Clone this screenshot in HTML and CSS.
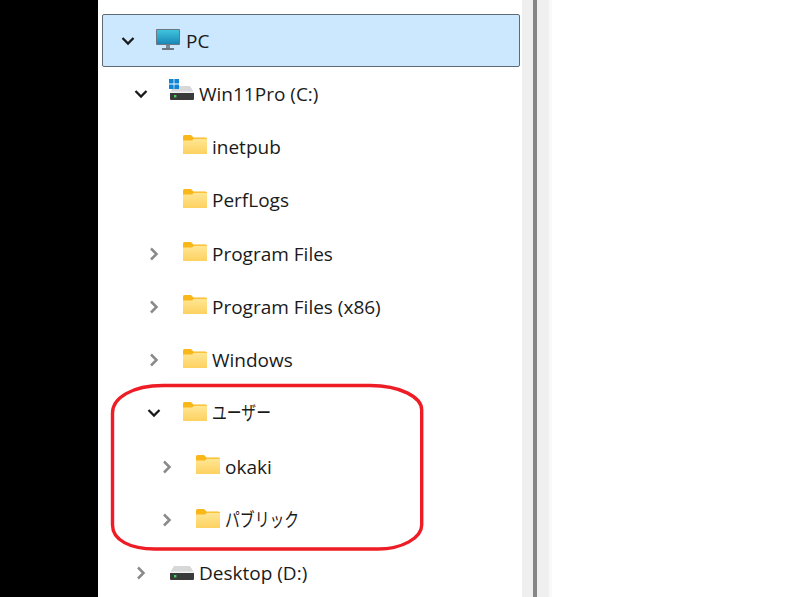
FILE: index.html
```html
<!DOCTYPE html>
<html lang="ja">
<head>
<meta charset="utf-8">
<title>PC</title>
<link rel="stylesheet" href="styles.css">
</head>
<body>
<svg width="0" height="0" class="defs">
  <defs>
    <linearGradient id="fg" x1="0" y1="0" x2="0" y2="1"><stop offset="0" stop-color="#ffe694"/><stop offset="1" stop-color="#fdd160"/></linearGradient>
    <linearGradient id="sg" x1="0" y1="0" x2="0" y2="1"><stop offset="0" stop-color="#3fc4dd"/><stop offset="1" stop-color="#1a88b8"/></linearGradient>
    <symbol id="folder" viewBox="0 0 24 20">
      <path d="M0 2.5Q0 1 1.5 1H8L10.5 3.5H22.5Q24 3.5 24 5V18.5Q24 20 22.5 20H1.5Q0 20 0 18.5Z" fill="#f9b71a"/>
      <path d="M0 6.5H9L11 4.8H23Q24 4.8 24 6V18.5Q24 20 22.5 20H1.5Q0 20 0 18.5Z" fill="url(#fg)"/>
    </symbol>
    <symbol id="down" viewBox="0 0 14 14"><path d="M1.5 4L7 9.5L12.5 4" fill="none" stroke="#1a1a1a" stroke-width="2.3"/></symbol>
    <symbol id="right" viewBox="0 0 14 14"><path d="M4 1.5L9.5 7L4 12.5" fill="none" stroke="#8a8a8a" stroke-width="2.5"/></symbol>
    <symbol id="drive" viewBox="0 0 24 14">
      <path d="M4 0H20L24 6.5H0Z" fill="#d8d8d8"/>
      <rect x="0" y="6" width="24" height="8" rx="1" fill="#3a3a3a"/>
      <rect x="0" y="5.5" width="24" height="1.5" fill="#f2f2f2"/>
      <rect x="4" y="9" width="2.4" height="2.4" fill="#3fd45a"/>
    </symbol>
  </defs>
</svg>
<div class="screen">
  <div class="blackout"></div>
  <nav class="tree">
    <div class="row selected lv0">
      <span class="chev"><svg class="ic"><use href="#down"/></svg></span>
      <svg class="pc" viewBox="0 0 24 22">
        <rect x="0" y="0" width="24" height="16" rx="1" fill="#6b7680"/>
        <rect x="1" y="1" width="22" height="14" fill="url(#sg)"/>
        <rect x="10" y="16" width="4" height="3" fill="#7d8790"/>
        <rect x="6" y="19" width="12" height="2" fill="#6b7680"/>
      </svg>
      <span class="label">PC</span>
    </div>
    <div class="row lv1">
      <span class="chev"><svg class="ic"><use href="#down"/></svg></span>
      <span class="drive-wrap">
        <svg class="win" viewBox="0 0 10 10"><path d="M0 0H4.6V4.6H0ZM5.4 0H10V4.6H5.4ZM0 5.4H4.6V10H0ZM5.4 5.4H10V10H5.4Z" fill="#1284d6"/></svg>
        <svg class="drive"><use href="#drive"/></svg>
      </span>
      <span class="label">Win11Pro (C:)</span>
    </div>
    <div class="row lv2">
      <span class="chev"></span>
      <svg class="folder"><use href="#folder"/></svg>
      <span class="label">inetpub</span>
    </div>
    <div class="row lv2">
      <span class="chev"></span>
      <svg class="folder"><use href="#folder"/></svg>
      <span class="label">PerfLogs</span>
    </div>
    <div class="row lv2">
      <span class="chev"><svg class="ic"><use href="#right"/></svg></span>
      <svg class="folder"><use href="#folder"/></svg>
      <span class="label">Program Files</span>
    </div>
    <div class="row lv2">
      <span class="chev"><svg class="ic"><use href="#right"/></svg></span>
      <svg class="folder"><use href="#folder"/></svg>
      <span class="label">Program Files (x86)</span>
    </div>
    <div class="row lv2">
      <span class="chev"><svg class="ic"><use href="#right"/></svg></span>
      <svg class="folder"><use href="#folder"/></svg>
      <span class="label">Windows</span>
    </div>
    <div class="row lv2">
      <span class="chev"><svg class="ic"><use href="#down"/></svg></span>
      <svg class="folder"><use href="#folder"/></svg>
      <span class="label ja">ユーザー</span>
    </div>
    <div class="row lv3">
      <span class="chev"><svg class="ic"><use href="#right"/></svg></span>
      <svg class="folder"><use href="#folder"/></svg>
      <span class="label">okaki</span>
    </div>
    <div class="row lv3">
      <span class="chev"><svg class="ic"><use href="#right"/></svg></span>
      <svg class="folder"><use href="#folder"/></svg>
      <span class="label ja">パブリック</span>
    </div>
    <div class="row lv1">
      <span class="chev"><svg class="ic"><use href="#right"/></svg></span>
      <span class="drive-wrap"><svg class="drive"><use href="#drive"/></svg></span>
      <span class="label">Desktop (D:)</span>
    </div>
  </nav>
  <div class="scroll-a"></div>
  <div class="splitter"></div>
  <div class="scroll-b"></div>
  <div class="pane-edge"></div>
  <main class="pane"></main>
  <svg class="callout" viewBox="0 0 800 597" aria-hidden="true">
    <path d="M163 385.5H370C400 385.5 421.7 397 421.7 410V525C421.7 538 402 549 378 549H155C130 549 112.5 540 112.5 525V413C112.5 398 132 385.5 163 385.5Z" fill="none" stroke="#ee1c25" stroke-width="3.4"/>
  </svg>
</div>
</body>
</html>
```
FILE: styles.css
```css
html, body {
  margin: 0;
  padding: 0;
  background: #fff;
}
.defs {
  position: absolute;
}
.screen {
  position: relative;
  display: flex;
  width: 800px;
  height: 597px;
  overflow: hidden;
  font-family: "Open Sans", "Noto Sans CJK JP", sans-serif;
  font-size: 19px;
  color: #1a1a1a;
}
.blackout {
  width: 98px;
  background: #000;
}
.tree {
  width: 424px;
  padding: 14px 2px 0 4px;
  box-sizing: border-box;
  display: flex;
  flex-direction: column;
  background: #fff;
}
.row {
  display: flex;
  align-items: center;
  flex: 0 0 53.3px;
  box-sizing: border-box;
}
.selected {
  flex-basis: 53px;
  background: #cce8ff;
  border: 1px solid #5f6b74;
  border-radius: 2px;
}
.lv0 { padding-left: 18px; }
.lv1 { padding-left: 32px; }
.lv2 { padding-left: 45px; }
.lv3 { padding-left: 58px; }
.chev {
  display: flex;
  width: 14px;
  height: 14px;
  margin-right: 22px;
}
.lv0 .chev { margin-right: 21px; }
.ic { width: 14px; height: 14px; }
.pc {
  width: 24px;
  height: 22px;
  margin: -1px 6px 0 0;
}
.drive-wrap {
  position: relative;
  display: flex;
  width: 24px;
  height: 14px;
  margin: -1px 5px 0 0;
}
.drive { width: 24px; height: 14px; }
.win {
  position: absolute;
  left: -1px;
  top: -7px;
  width: 10px;
  height: 10px;
}
.folder {
  width: 24px;
  height: 20px;
  margin: -5px 5px 0 0;
}
.label {
  white-space: nowrap;
}
.ja {
  font-size: 19px;
  font-weight: 400;
  transform: scaleX(0.78);
  transform-origin: left center;
  margin-top: -3px;
}
.scroll-a {
  width: 11px;
  background: #efefef;
}
.splitter {
  width: 4px;
  background: #868686;
}
.scroll-b {
  width: 12px;
  background: #efefef;
}
.pane-edge {
  width: 3px;
  background: #f9f9f9;
}
.pane {
  flex: 1;
  background: #fff;
}
.callout {
  position: absolute;
  left: 0;
  top: 0;
  width: 800px;
  height: 597px;
  pointer-events: none;
}
```
